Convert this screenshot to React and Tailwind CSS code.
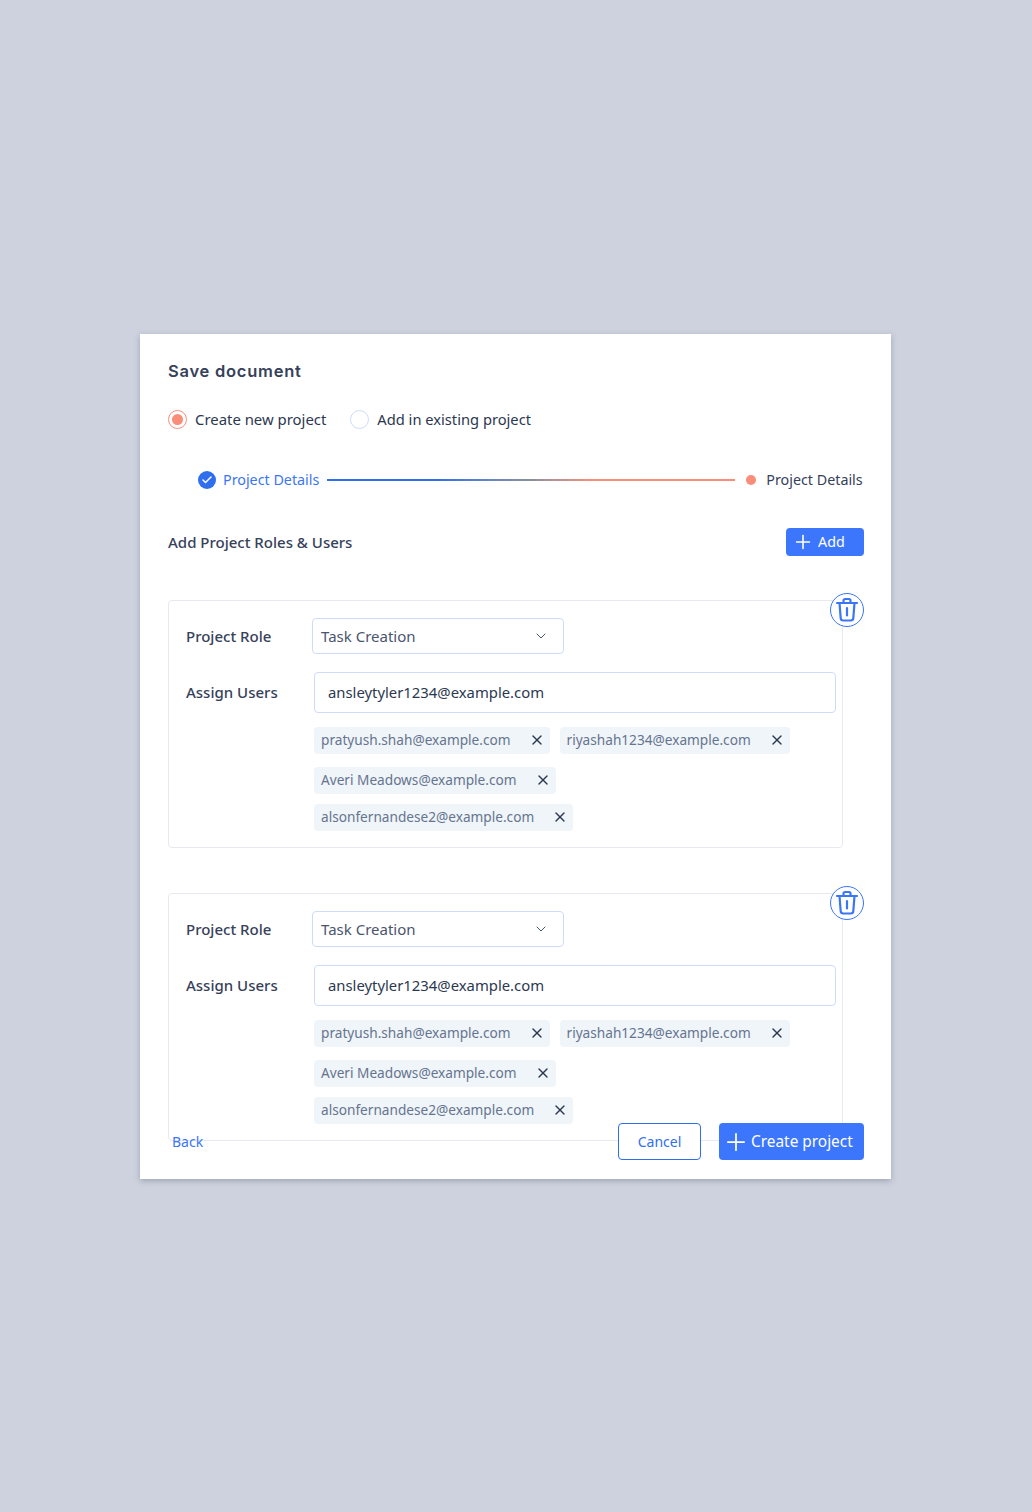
import { ChevronDown, Plus, X, Check } from "lucide-react"

function TrashIcon() {
  return (
    <div className="absolute -right-[22px] -top-[8px] flex h-[34px] w-[34px] items-center justify-center rounded-full border border-[#3b76f6] bg-white">
      <svg width="24" height="26" viewBox="0 0 24 26" fill="none" stroke="#3b76f6" strokeWidth="2.2" strokeLinecap="round" strokeLinejoin="round">
        <path d="M2 6h20" />
        <path d="M8.5 6V3.6C8.5 2.700 9.200 2 10.100 2h3.800c.9 0 1.600.7 1.600 1.600V6" />
        <path d="M4.500 6l1.200 15.200c.1 1.300 1.100 2.300 2.400 2.300h7.800c1.300 0 2.300-1 2.400-2.300L19.500 6" />
        <path d="M12 11v7.500" />
      </svg>
    </div>
  )
}

function Chip({ label }) {
  return (
    <div className="flex h-[27px] items-center rounded-[4px] bg-[#eff5f9] pl-[7px] pr-[5px] text-[13.65px] text-[#66748f]">
      <span>{label}</span>
      <X className="ml-[18px] h-[16px] w-[16px] text-[#2c3850]" strokeWidth={2} />
    </div>
  )
}

function RoleBox() {
  return (
    <div className="relative h-[248px] w-[675px] rounded-[4px] border-[1.5px] border-[#e6eaf0]">
      <TrashIcon />
      <div className="flex items-center pl-[17px] pt-[17px]">
        <span className="w-[126px] text-[15px] font-medium text-[#36415a]">Project Role</span>
        <div className="flex h-[36px] w-[252px] items-center justify-between rounded-[4px] border-[1.5px] border-[#cfdcf8] pl-[8px] pr-[14px] text-[15px] text-[#4a556e]">
          <span>Task Creation</span>
          <ChevronDown className="h-[16px] w-[16px] text-[#4a556e]" strokeWidth={1.5} />
        </div>
      </div>
      <div className="mt-[18px] flex pl-[17px]">
        <span className="w-[128px] pt-[9px] text-[15px] font-medium text-[#36415a]">Assign Users</span>
        <div>
          <div className="flex h-[41px] w-[522px] items-center rounded-[4px] border-[1.5px] border-[#cfdcf8] pl-[13px] text-[14.85px] text-[#2c3850]">
            ansleytyler1234@example.com
          </div>
          <div className="mt-[14px] flex gap-[10px]">
            <Chip label="pratyush.shah@example.com" />
            <Chip label="riyashah1234@example.com" />
          </div>
          <div className="mt-[13px] flex">
            <Chip label="Averi Meadows@example.com" />
          </div>
          <div className="mt-[10px] flex">
            <Chip label="alsonfernandese2@example.com" />
          </div>
        </div>
      </div>
    </div>
  )
}

export default function App() {
  return (
    <div className="min-h-[1512px] bg-[#ced2de] pl-[140px] pt-[334px] font-['Noto_Sans',sans-serif]">
      <div className="relative h-[845px] w-[751px] bg-white pl-[28px] pr-[27px] shadow-[0_2px_6px_rgba(70,80,110,0.35)]">
        <div className="pt-[26px] font-['Inter',sans-serif] text-[16.5px] font-semibold leading-[23px] tracking-[0.75px] text-[#36415a]">Save document</div>

        <div className="mt-[25px] flex items-center text-[14.9px] text-[#2c3850]">
          <div className="flex h-[19px] w-[19px] items-center justify-center rounded-full border border-[#f98d7a]">
            <div className="h-[11px] w-[11px] rounded-full bg-[#f98d7a]" />
          </div>
          <span className="ml-[8px]">Create new project</span>
          <div className="ml-[24px] h-[19px] w-[19px] rounded-full border border-[#cfdcf8]" />
          <span className="ml-[8px] text-[14.7px]">Add in existing project</span>
        </div>

        <div className="mt-[39px] flex items-center pl-[30px] text-[14.3px]">
          <div className="flex h-[18px] w-[18px] items-center justify-center rounded-full bg-[#2f6fed]">
            <Check className="h-[12px] w-[12px] text-white" strokeWidth={3} />
          </div>
          <span className="ml-[7px] text-[#3b76f6]">Project Details</span>
          <div className="ml-[8px] h-[2px] w-[408px] bg-gradient-to-r from-[#2f6fed] from-27% via-[#8a8f9d] to-[#f98d7a] to-65%" />
          <div className="ml-[11px] h-[10px] w-[10px] rounded-full bg-[#f98d7a]" />
          <span className="ml-[10px] text-[#36415a]">Project Details</span>
        </div>

        <div className="mt-[37px] flex items-center justify-between">
          <span className="text-[15px] font-medium text-[#36415a]">Add Project Roles &amp; Users</span>
          <button className="flex h-[28px] w-[78px] items-center rounded-[4px] bg-[#3b76fd] pl-[6px] text-[14.3px] text-white">
            <Plus className="h-[22px] w-[22px]" strokeWidth={1.75} />
            <span className="ml-[4px]">Add</span>
          </button>
        </div>

        <div className="mt-[44px]">
          <RoleBox />
        </div>
        <div className="mt-[45px]">
          <RoleBox />
        </div>

        <div className="absolute bottom-[19px] left-[32px] right-[27px] flex h-[37px] items-center">
          <span className="text-[14px] text-[#3b76f6]">Back</span>
          <button className="ml-auto h-[37px] w-[83px] rounded-[4px] border border-[#2f6fed] bg-white text-[14px] text-[#2f6fed]">Cancel</button>
          <button className="ml-[18px] flex h-[37px] w-[145px] items-center rounded-[4px] bg-[#3b76fd] pl-[3px] text-[15.4px] text-white">
            <Plus className="h-[28px] w-[28px]" strokeWidth={1.5} />
            <span className="ml-[1px]">Create project</span>
          </button>
        </div>
      </div>
    </div>
  )
}
